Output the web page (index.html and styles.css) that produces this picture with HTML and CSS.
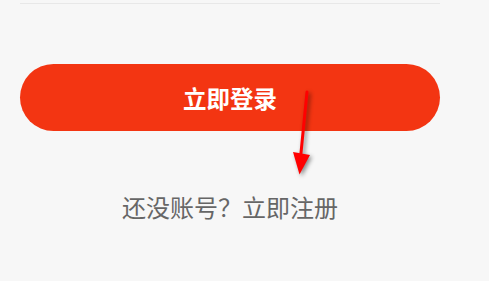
FILE: index.html
```html
<!DOCTYPE html>
<html lang="zh">
<head>
<meta charset="utf-8">
<link rel="stylesheet" href="styles.css">
</head>
<body>
<div class="page">
  <div class="divider"></div>
  <button class="login-btn">立即登录</button>
  <p class="register">还没账号？立即注册</p>
</div>
<svg class="annot-arrow" width="489" height="281" viewBox="0 0 489 281">
  <line x1="307" y1="92" x2="300.5" y2="158" stroke="#ff0000" stroke-width="3" stroke-linecap="round"/>
  <polygon points="293,152 310,155 299.5,174.5" fill="#ff0000"/>
</svg>
</body>
</html>
```
FILE: styles.css
```css
html, body {
  margin: 0;
  padding: 0;
  background: #f7f7f7;
}
body {
  width: 489px;
  height: 281px;
  overflow: hidden;
  font-family: "Noto Sans CJK SC", "Noto Sans", sans-serif;
  position: relative;
}
.page {
  width: 420px;
  padding: 3px 20px 0;
  display: flex;
  flex-direction: column;
}
.divider {
  height: 1px;
  background: #e8e8e8;
}
.login-btn {
  margin-top: 60px;
  height: 67px;
  border: none;
  border-radius: 34px;
  background: #f33512;
  color: #ffffff;
  font-family: inherit;
  font-size: 23.5px;
  font-weight: 700;
  padding: 0;
}
.register {
  margin: 61px 0 0;
  line-height: 30px;
  text-align: center;
  color: #666666;
  font-size: 24px;
}
.annot-arrow {
  position: absolute;
  left: 0;
  top: 0;
  filter: drop-shadow(2px 2px 2px rgba(0,0,0,0.45));
}
```
